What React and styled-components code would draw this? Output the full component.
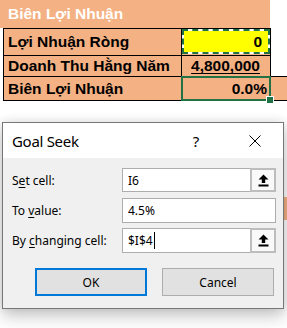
import React from "react";
import styled, { createGlobalStyle } from "styled-components";

const Global = createGlobalStyle`
  html, body { margin: 0; padding: 0; background: #ffffff; }
  body { width: 287px; height: 328px; overflow: hidden; }
`;

const ORANGE = "#F4B183";
const GREEN = "#217346";

const Page = styled.div`
  position: relative;
  width: 287px;
  height: 328px;
  background: #ffffff;
  overflow: hidden;
`;

const Sheet = styled.div`
  display: flex;
  flex-direction: column;
  width: 287px;
  font-family: "Liberation Sans", Arial, sans-serif;
  font-weight: 700;
  font-size: 15.5px;
  color: #000;
`;

const HeaderRow = styled.div`
  display: flex;
  align-items: center;
  width: 270px;
  height: 28px;
  box-sizing: border-box;
  padding-left: 8px;
  background: ${ORANGE};
  color: #ffffff;
`;

const Row = styled.div`
  display: flex;
  height: ${(p) => p.$h}px;
  padding-left: 3px;
  background: #ffffff;
`;

const Cell = styled.div`
  position: relative;
  flex: ${(p) => (p.$w ? `0 0 ${p.$w}px` : "1 1 auto")};
  display: flex;
  align-items: center;
  justify-content: ${(p) => (p.$right ? "flex-end" : "flex-start")};
  box-sizing: border-box;
  padding: ${(p) => (p.$right ? `0 ${p.$pr ?? 8}px 0 0` : "0 0 0 4px")};
  background-color: ${(p) => (p.$blank ? "#ffffff" : ORANGE)};
  border-top: ${(p) => (p.$top ? "1px solid #000" : "none")};
  border-bottom: ${(p) => (p.$bottom ? "1px solid #000" : "none")};
  border-left: ${(p) => (p.$left ? "1px solid #000" : "none")};
  white-space: nowrap;
`;

const Underlined = styled.span`
  text-decoration: underline;
  text-underline-offset: 2px;
  text-decoration-thickness: 1px;
`;

const YellowBox = styled.div`
  position: absolute;
  inset: 0 0 1px 0;
  background: linear-gradient(#ffff00, #ffff00) padding-box, #ffffff border-box;
  border: 2px dashed ${GREEN};
  box-sizing: border-box;
  display: flex;
  align-items: center;
  justify-content: flex-end;
  padding-right: 6px;
`;

const Selection = styled.div`
  position: absolute;
  left: -1px;
  top: -1px;
  right: -1px;
  bottom: -1px;
  border: 2px solid ${GREEN};
  box-sizing: border-box;
  pointer-events: none;
  z-index: 1;
`;

const Handle = styled.div`
  position: absolute;
  right: -5px;
  bottom: -5px;
  width: 6px;
  height: 6px;
  background: ${GREEN};
  border: 1px solid #ffffff;
`;

const Band = styled.div`
  height: ${(p) => p.$h}px;
  display: flex;
  justify-content: flex-end;
`;

const BandFill = styled.div`
  width: 6px;
  background: ${(p) => p.$bg};
`;

/* Dialog */
const Dialog = styled.div`
  position: absolute;
  left: 2px;
  top: 122px;
  width: 282px;
  height: 187px;
  box-sizing: border-box;
  border: 1px solid #777777;
  background: #f0f0f0;
  box-shadow: 0 8px 16px rgba(0, 0, 0, 0.2), 0 0 10px rgba(0, 0, 0, 0.12);
  display: flex;
  flex-direction: column;
  font-family: "Noto Sans", "Open Sans", sans-serif;
  font-size: 12px;
  color: #000;
  z-index: 2;
`;

const TitleBar = styled.div`
  height: 35px;
  flex: none;
  background: #ffffff;
  display: flex;
  align-items: center;
  padding-left: 9px;
`;

const Title = styled.div`
  flex: 1;
  font-size: 15px;
  letter-spacing: -0.3px;
`;

const TitleBtn = styled.div`
  flex: none;
  width: ${(p) => p.$w}px;
  display: flex;
  justify-content: center;
  align-items: center;
  font-size: 15px;
`;

const Body = styled.div`
  display: flex;
  flex-direction: column;
  padding: 10px 7px 0 9px;
`;

const FieldRow = styled.div`
  display: grid;
  grid-template-columns: 110px 1fr;
  align-items: center;
  height: ${(p) => p.$h}px;
  margin-top: ${(p) => p.$mt || 0}px;
`;

const U = styled.span`
  text-decoration: underline;
  text-underline-offset: 2px;
`;

const InputWrap = styled.div`
  display: flex;
  height: 100%;
`;

const Input = styled.div`
  flex: 1;
  display: flex;
  align-items: center;
  box-sizing: border-box;
  background: #ffffff;
  border: 1px solid #adadad;
  border-right: ${(p) => (p.$withBtn ? "none" : "1px solid #adadad")};
  padding-left: 5px;
`;

const Caret = styled.span`
  display: inline-block;
  width: 1px;
  height: 17px;
  background: #000;
  margin-left: 1px;
`;

const RefBtn = styled.div`
  width: 26px;
  box-sizing: border-box;
  border: 2px solid #bdbdbd;
  background: #f9f9f9;
  display: flex;
  align-items: center;
  justify-content: center;
`;

const Buttons = styled.div`
  display: flex;
  gap: 15px;
  padding: 15px 0 0 32px;
`;

const Button = styled.div`
  width: 112px;
  height: 28px;
  box-sizing: border-box;
  display: flex;
  align-items: center;
  justify-content: center;
  background: #e1e1e1;
  border: ${(p) => (p.$primary ? "2px solid #0078d7" : "1px solid #adadad")};
`;

const RefIcon = () => (
  <svg width="11" height="13" viewBox="0 0 11 13">
    <polygon points="5.5,0.5 10.5,5.5 7.2,5.5 7.2,9 3.8,9 3.8,5.5 0.5,5.5" fill="#000" />
    <rect x="0.5" y="10.5" width="10" height="2" fill="#000" />
  </svg>
);

const CloseIcon = () => (
  <svg width="12" height="12" viewBox="0 0 12 12">
    <path d="M0.5 0.5 L11.5 11.5 M11.5 0.5 L0.5 11.5" stroke="#000" strokeWidth="1" />
  </svg>
);

export default function App() {
  return (
    <Page>
      <Global />
      <Sheet>
        <HeaderRow>Biên Lợi Nhuận</HeaderRow>
        <Row $h={27}>
          <Cell $w={178} $top $left>Lợi Nhuận Ròng</Cell>
          <Cell $w={89} $top $left $right>
            <YellowBox>0</YellowBox>
          </Cell>
          <Cell $blank $left />
        </Row>
        <Row $h={21}>
          <Cell $w={178} $top $left>Doanh Thu Hằng Năm</Cell>
          <Cell $w={89} $top $left $right $pr={10}>
            <Underlined>4,800,000</Underlined>
          </Cell>
          <Cell $blank $left />
        </Row>
        <Row $h={25}>
          <Cell $w={178} $top $bottom $left>Biên Lợi Nhuận</Cell>
          <Cell $w={89} $top $bottom $left $right $pr={3}>
            0.0%
            <Selection>
              <Handle />
            </Selection>
          </Cell>
          <Cell $top $bottom $left />
        </Row>
        <Band $h={96} />
        <Band $h={23}>
          <BandFill $bg={ORANGE} />
        </Band>
      </Sheet>

      <Dialog>
        <TitleBar>
          <Title>Goal Seek</Title>
          <TitleBtn $w={62}>?</TitleBtn>
          <TitleBtn $w={56}>
            <CloseIcon />
          </TitleBtn>
        </TitleBar>
        <Body>
          <FieldRow $h={24}>
            <div>
              S<U>e</U>t cell:
            </div>
            <InputWrap>
              <Input $withBtn>I6</Input>
              <RefBtn>
                <RefIcon />
              </RefBtn>
            </InputWrap>
          </FieldRow>
          <FieldRow $h={25} $mt={6}>
            <div>
              To <U>v</U>alue:
            </div>
            <InputWrap>
              <Input>4.5%</Input>
            </InputWrap>
          </FieldRow>
          <FieldRow $h={25} $mt={5}>
            <div>
              By <U>c</U>hanging cell:
            </div>
            <InputWrap>
              <Input $withBtn>
                $I$4
                <Caret />
              </Input>
              <RefBtn>
                <RefIcon />
              </RefBtn>
            </InputWrap>
          </FieldRow>
        </Body>
        <Buttons>
          <Button $primary>OK</Button>
          <Button>Cancel</Button>
        </Buttons>
      </Dialog>
    </Page>
  );
}
